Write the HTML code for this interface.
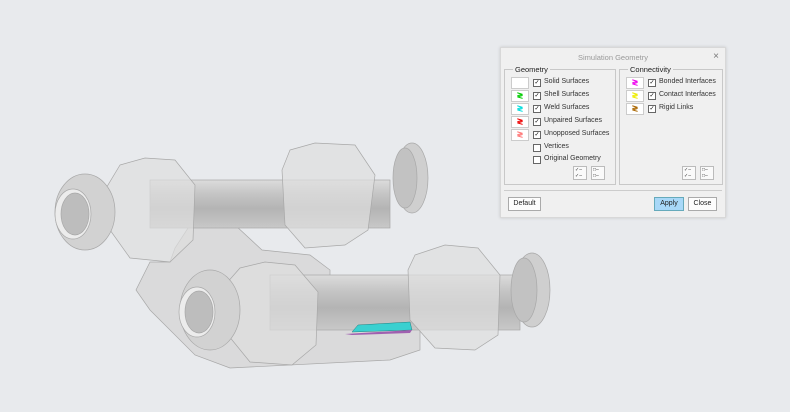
<!DOCTYPE html>
<html><head><style>
body{margin:0;width:790px;height:412px;background:#e8eaed;overflow:hidden;position:relative;font-family:"Liberation Sans",sans-serif}
.dlg{position:absolute;left:500px;top:47px;width:224px;height:169px;background:#f0f0f0;border:1px solid #d8d8d8;box-shadow:0 0 3px rgba(0,0,0,.15)}
.title{position:absolute;left:0;right:0;top:5px;text-align:center;font-size:7.5px;color:#9a9a9a}
.x{position:absolute;right:6px;top:3px;font-size:10px;color:#777}
.grp{position:absolute;border:1px solid #c8c8c8;top:21px;height:114px}
.gl{position:absolute;top:-5px;left:8px;background:#f0f0f0;padding:0 2px;font-size:7.5px;color:#222}
.row{position:absolute;font-size:7px;color:#333;height:10px;line-height:10px}
.sw{position:absolute;width:16px;height:10px;background:#fff;border:1px solid #ccc;font-size:8px;text-align:center;line-height:10px;font-weight:bold}
.cb{position:absolute;width:6px;height:6px;border:1px solid #666;background:#fff;font-size:6px;line-height:6px;text-align:center}
.btn{position:absolute;top:149px;height:12px;border:1px solid #aaa;background:#fdfdfd;font-size:7px;line-height:12px;text-align:center;color:#222}
.ic{position:absolute;width:14px;height:14px;border:1px solid #bbb;background:#fafafa;font-size:5px;line-height:6px;color:#333;text-align:left;padding-left:1px;box-sizing:border-box}
</style></head><body>
<svg width="790" height="412" style="position:absolute;left:0;top:0">
<defs>
<linearGradient id="tg" x1="0" y1="0" x2="0" y2="1"><stop offset="0" stop-color="#dcdcdc"/><stop offset="0.3" stop-color="#c4c4c4"/><stop offset="0.6" stop-color="#b4b4b4"/><stop offset="1" stop-color="#c8c8c8"/></linearGradient>
</defs>
<g stroke="#a8a8a8" stroke-width="0.7">
<path d="M150,262 L170,262 L175,248 L190,225 L235,225 L262,250 L310,255 L330,270 L330,300 L420,320 L420,350 L390,360 L230,368 L195,355 L150,310 L136,290 Z" fill="#d6d6d6" fill-opacity="0.8"/>
<rect x="150" y="180" width="240" height="48" fill="url(#tg)"/>
<ellipse cx="412" cy="178" rx="16" ry="35" fill="#cfcfcf"/>
<ellipse cx="405" cy="178" rx="12" ry="30" fill="#c2c2c2"/>
<polygon points="290,150 315,143 355,145 375,175 368,230 345,245 305,248 285,225 282,170" fill="#dedede" fill-opacity="0.7"/>
<polygon points="120,165 145,158 175,160 195,185 193,240 170,262 130,258 110,230 105,190" fill="#dedede" fill-opacity="0.7"/>
<ellipse cx="85" cy="212" rx="30" ry="38" fill="#d2d2d2"/>
<ellipse cx="73" cy="214" rx="18" ry="25" fill="#ececec"/>
<ellipse cx="75" cy="214" rx="14" ry="21" fill="#bdbdbd"/>
<rect x="270" y="275" width="250" height="55" fill="url(#tg)"/>
<ellipse cx="532" cy="290" rx="18" ry="37" fill="#cfcfcf"/>
<ellipse cx="524" cy="290" rx="13" ry="32" fill="#c2c2c2"/>
<polygon points="415,255 445,245 478,248 500,275 498,335 475,350 435,348 410,320 408,270" fill="#dedede" fill-opacity="0.7"/>
<polygon points="240,268 265,262 295,265 318,292 316,345 292,365 250,362 228,335 225,285" fill="#dedede" fill-opacity="0.7"/>
<ellipse cx="210" cy="310" rx="30" ry="40" fill="#d2d2d2"/>
<ellipse cx="197" cy="312" rx="18" ry="25" fill="#ececec"/>
<ellipse cx="199" cy="312" rx="14" ry="21" fill="#bdbdbd"/>
</g>
<polygon points="352,332 358,325 410,322 412,330" fill="#3ad0d0" stroke="#208080" stroke-width="0.5"/>
<polygon points="345,334 412,330 410,333 352,335" fill="#a060b0"/>
</svg>
<div class="dlg">
<div class="title">Simulation Geometry</div><div class="x">×</div>
<div class="grp" style="left:3px;width:110px"><span class="gl">Geometry</span>
<div class="sw" style="left:6px;top:7px"></div>
<div class="sw" style="left:6px;top:20px;color:#0c0">≷</div>
<div class="sw" style="left:6px;top:33px;color:#0dd">≷</div>
<div class="sw" style="left:6px;top:46px;color:#e00">≷</div>
<div class="sw" style="left:6px;top:59px;color:#f77">≷</div>
<div class="cb" style="left:28px;top:9px">✓</div><div class="row" style="left:39px;top:7px">Solid Surfaces</div>
<div class="cb" style="left:28px;top:22px">✓</div><div class="row" style="left:39px;top:20px">Shell Surfaces</div>
<div class="cb" style="left:28px;top:35px">✓</div><div class="row" style="left:39px;top:33px">Weld Surfaces</div>
<div class="cb" style="left:28px;top:48px">✓</div><div class="row" style="left:39px;top:46px">Unpaired Surfaces</div>
<div class="cb" style="left:28px;top:61px">✓</div><div class="row" style="left:39px;top:59px">Unopposed Surfaces</div>
<div class="cb" style="left:28px;top:74px"></div><div class="row" style="left:39px;top:72px">Vertices</div>
<div class="cb" style="left:28px;top:86px"></div><div class="row" style="left:39px;top:84px">Original Geometry</div>
<div class="ic" style="left:68px;top:96px">✓–<br>✓–</div><div class="ic" style="left:86px;top:96px">□–<br>□–</div>
</div>
<div class="grp" style="left:118px;width:102px"><span class="gl">Connectivity</span>
<div class="sw" style="left:6px;top:7px;color:#e0e">≷</div>
<div class="sw" style="left:6px;top:20px;color:#ee0">≷</div>
<div class="sw" style="left:6px;top:33px;color:#a60">≷</div>
<div class="cb" style="left:28px;top:9px">✓</div><div class="row" style="left:39px;top:7px">Bonded Interfaces</div>
<div class="cb" style="left:28px;top:22px">✓</div><div class="row" style="left:39px;top:20px">Contact Interfaces</div>
<div class="cb" style="left:28px;top:35px">✓</div><div class="row" style="left:39px;top:33px">Rigid Links</div>
<div class="ic" style="left:62px;top:96px">✓–<br>✓–</div><div class="ic" style="left:80px;top:96px">□–<br>□–</div>
</div>
<div style="position:absolute;left:3px;right:3px;top:142px;border-top:1px solid #ccc"></div>
<div class="btn" style="left:7px;width:31px">Default</div>
<div class="btn" style="left:153px;width:28px;background:#a8d8f8;border-color:#6ab">Apply</div>
<div class="btn" style="left:187px;width:27px">Close</div>
</div>
</body></html>
